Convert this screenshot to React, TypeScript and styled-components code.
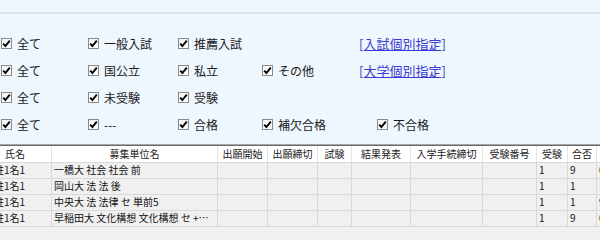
import React from "react";
import styled, { createGlobalStyle } from "styled-components";

const Global = createGlobalStyle`
  html, body { margin: 0; padding: 0; background: #f0f0f0; }
  body { font-family: "Noto Sans CJK JP", "Noto Sans", sans-serif; color: #1a1a1a; }
`;

const Page = styled.div`
  width: 600px;
  height: 240px;
  overflow: hidden;
  background: #f0f0f0;
`;

const FilterPanel = styled.div`
  height: 144px;
  background: #eef6fe;
  display: flex;
  flex-direction: column;
`;

const TopStrip = styled.div`
  height: 12px;
  border-bottom: 2px solid #dfe3e8;
`;

const Rows = styled.div`
  padding-top: 16px;
  display: flex;
  flex-direction: column;
`;

const Row = styled.div`
  height: 27px;
  display: flex;
  align-items: center;
  padding-left: 1px;
`;

const Item = styled.label<{ $w: number }>`
  width: ${(p) => p.$w}px;
  flex: none;
  display: flex;
  align-items: center;
  gap: 5px;
  font-size: 12px;
  line-height: 14px;
  color: #1a1a1a;
`;

const Box = styled.span`
  width: 9px;
  height: 9px;
  border: 1px solid #8a8a8a;
  background: linear-gradient(#f4f4f4, #ffffff);
  display: flex;
  align-items: center;
  justify-content: center;
  flex: none;
`;

const LinkText = styled.a`
  font-size: 13px;
  line-height: 15px;
  color: #3a3ad0;
  text-decoration: underline;
  cursor: pointer;
`;

const Check = () => (
  <Box>
    <svg width="9" height="9" viewBox="0 0 9 9">
      <path d="M1.2 4.6 L3.4 7 L7.8 1.6" fill="none" stroke="#000" strokeWidth="1.9" />
    </svg>
  </Box>
);

const Cb = ({ w, label }: { w: number; label: string }) => (
  <Item $w={w}>
    <Check />
    {label}
  </Item>
);

const Table = styled.div`
  margin-left: -21px;
  border-top: 1px solid #a6a6a6;
  display: flex;
  flex-direction: column;
`;

const HeadRow = styled.div`
  display: flex;
  height: 16px;
  background: #ffffff;
  border-top: 1px solid #6a6a6a;
`;

const HeadCell = styled.div<{ $w: number }>`
  width: ${(p) => p.$w}px;
  flex: none;
  box-sizing: border-box;
  border-right: 1px solid #e4e4e4;
  font-size: 10px;
  line-height: 16px;
  text-align: center;
  color: #222;
  white-space: nowrap;
  overflow: hidden;
`;

const DataRow = styled.div`
  display: flex;
  height: 15px;
  background: #f0f0f0;
  border-top: 1px solid #d9d9d9;
`;

const Cell = styled.div<{ $w: number; $pad?: number }>`
  width: ${(p) => p.$w}px;
  flex: none;
  box-sizing: border-box;
  border-right: 1px solid #d9d9d9;
  padding-left: ${(p) => p.$pad ?? 2}px;
  font-size: 10px;
  line-height: 14px;
  color: #111;
  white-space: nowrap;
  overflow: hidden;
  text-overflow: ellipsis;
`;

const BottomLine = styled.div`
  border-top: 1px solid #d9d9d9;
`;

const columns = [
  { t: "氏名", w: 73 },
  { t: "募集単位名", w: 166 },
  { t: "出願開始", w: 50 },
  { t: "出願締切", w: 50 },
  { t: "試験", w: 34 },
  { t: "結果発表", w: 59 },
  { t: "入学手続締切", w: 72 },
  { t: "受験番号", w: 54 },
  { t: "受験", w: 31 },
  { t: "合否", w: 29 },
  { t: "備考", w: 40 },
];

const data = [
  ["姓1名1", "一橋大 社会 社会 前", "", "", "", "", "", "", "1", "9", "0"],
  ["姓1名1", "岡山大 法 法 後", "", "", "", "", "", "", "1", "1", "1"],
  ["姓1名1", "中央大 法 法律 セ 単前5", "", "", "", "", "", "", "1", "1", "9"],
  ["姓1名1", "早稲田大 文化構想 文化構想 セ +共通テスト", "", "", "", "", "", "", "1", "9", "0"],
];

export default function App() {
  return (
    <Page>
      <Global />
      <FilterPanel>
        <TopStrip />
        <Rows>
          <Row>
            <Cb w={87} label="全て" />
            <Cb w={90} label="一般入試" />
            <Cb w={181} label="推薦入試" />
            <LinkText>[入試個別指定]</LinkText>
          </Row>
          <Row>
            <Cb w={87} label="全て" />
            <Cb w={90} label="国公立" />
            <Cb w={84} label="私立" />
            <Cb w={97} label="その他" />
            <LinkText>[大学個別指定]</LinkText>
          </Row>
          <Row>
            <Cb w={87} label="全て" />
            <Cb w={90} label="未受験" />
            <Cb w={84} label="受験" />
          </Row>
          <Row>
            <Cb w={87} label="全て" />
            <Cb w={90} label="---" />
            <Cb w={84} label="合格" />
            <Cb w={115} label="補欠合格" />
            <Cb w={100} label="不合格" />
          </Row>
        </Rows>
      </FilterPanel>
      <Table>
        <HeadRow>
          {columns.map((c) => (
            <HeadCell key={c.t} $w={c.w}>
              {c.t}
            </HeadCell>
          ))}
        </HeadRow>
        {data.map((r, i) => (
          <DataRow key={i}>
            {r.map((v, j) => (
              <Cell key={j} $w={columns[j].w} $pad={j === 0 ? 15 : 2}>
                {v}
              </Cell>
            ))}
          </DataRow>
        ))}
        <BottomLine />
      </Table>
    </Page>
  );
}
